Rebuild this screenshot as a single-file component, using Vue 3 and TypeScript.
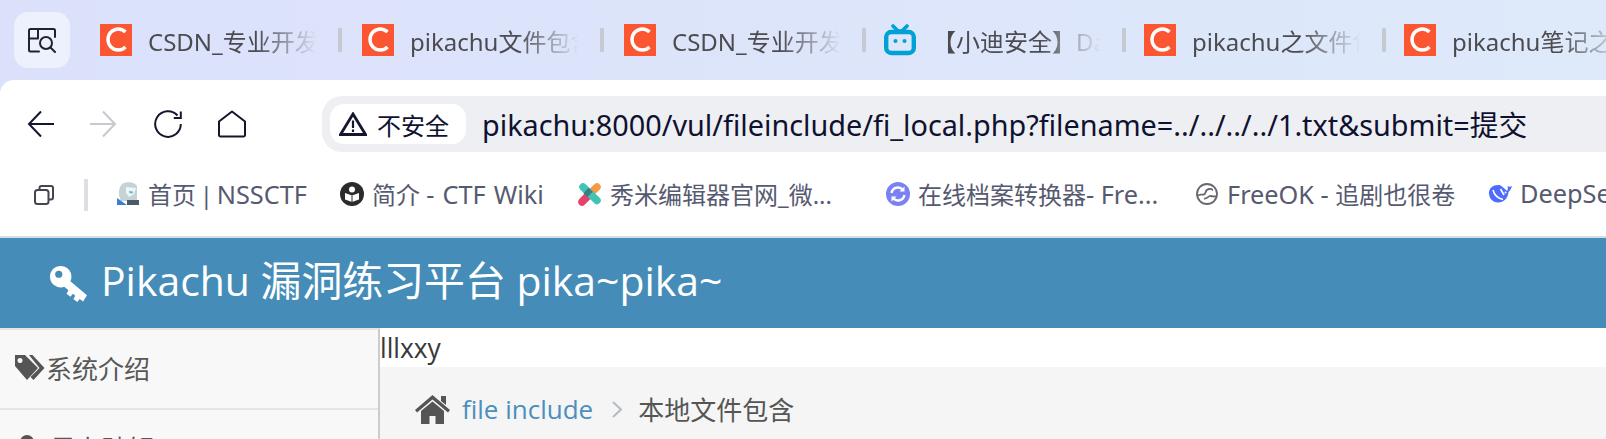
<script setup lang="ts">
interface Tab { title: string; icon: 'csdn' | 'bili'; width: number }
interface Part { text: string; latin?: boolean; gap?: number }
interface Mark { parts: Part[]; icon: string; width: number }

const tabs: Tab[] = [
  { title: 'CSDN_专业开发者社区', icon: 'csdn', width: 262 },
  { title: 'pikachu文件包含漏洞', icon: 'csdn', width: 262 },
  { title: 'CSDN_专业开发者社区', icon: 'csdn', width: 260 },
  { title: '【小迪安全】Day', icon: 'bili', width: 260 },
  { title: 'pikachu之文件包含', icon: 'csdn', width: 260 },
  { title: 'pikachu笔记之文件包含', icon: 'csdn', width: 260 }
]

const marks: Mark[] = [
  { parts: [{ text: '首页 | ', gap: -2.5 }, { text: 'NSSCTF', latin: true }], icon: 'nss', width: 224 },
  { parts: [{ text: '简介 ' }, { text: '- CTF Wiki', latin: true, gap: 1.5 }], icon: 'wiki', width: 238 },
  { parts: [{ text: '秀米编辑器官网_微...' }], icon: 'xiumi', width: 308 },
  { parts: [{ text: '在线档案转换器' }, { text: '- Fre...', latin: true }], icon: 'conv', width: 309 },
  { parts: [{ text: 'FreeOK - ', latin: true }, { text: '追剧也很卷' }], icon: 'free', width: 293 },
  { parts: [{ text: 'DeepSeek', latin: true }], icon: 'deep', width: 160 }
]
</script>

<template>
  <div class="page">
    <div class="tabbar">
      <button class="tab-search" type="button" aria-label="标签搜索">
        <svg width="28" height="25" viewBox="0 0 28 25" fill="none" stroke="#20222e" stroke-width="2" stroke-linecap="round" stroke-linejoin="round">
          <path d="M11 23.500H2.500A1.500 1.500 0 0 1 1 22V2.500A1.500 1.500 0 0 1 2.500 1h23A1.500 1.500 0 0 1 27 2.500V9" />
          <path d="M10 1v9.500H1" />
          <circle cx="18" cy="15" r="6" />
          <path d="M22.500 19.500l4.500 4.500" />
        </svg>
      </button>
      <div class="tabs">
        <div v-for="(tab, i) in tabs" :key="i" class="tab" :style="{ width: tab.width + 'px' }">
          <svg v-if="tab.icon === 'csdn'" class="fav" width="32" height="32" viewBox="0 0 32 32">
            <rect width="32" height="32" fill="#fc5531" />
            <path d="M25.500 8C23.500 6 21 5 18.500 5C12.500 5 8 9.500 8 15.500C8 21.500 12.500 26 18.500 26C21 26 23.500 25 25.500 23" fill="none" stroke="#fff" stroke-width="3.400" />
          </svg>
          <svg v-else class="fav" width="32" height="32" viewBox="0 0 32 32">
            <path d="M9 2l5 5h4l5-5" fill="none" stroke="#00a1d6" stroke-width="3.600" stroke-linecap="round" />
            <rect x="2.200" y="8" width="27.600" height="21" rx="5" fill="none" stroke="#00a1d6" stroke-width="4.400" />
            <circle cx="11.500" cy="17" r="2" fill="#00a1d6" />
            <circle cx="20.500" cy="17" r="2" fill="#00a1d6" />
          </svg>
          <span class="tab-title">{{ tab.title }}</span>
          <i class="tab-sep"></i>
        </div>
      </div>
    </div>

    <div class="toolbar">
      <div class="nav-row">
        <div class="nav-buttons">
          <svg width="28" height="28" viewBox="0 0 28 28" fill="none" stroke="#14162e" stroke-width="2">
            <path d="M28 14H3M15 1.500L3 14l12 12.500" />
          </svg>
          <svg width="28" height="28" viewBox="0 0 28 28" fill="none" stroke="#c8c8d0" stroke-width="2">
            <path d="M0 14H25M13 1.500L25 14 13 26.500" />
          </svg>
          <svg width="28" height="28" viewBox="0 0 28 28" fill="none" stroke="#14162e" stroke-width="2">
            <path d="M23.500 5.500A12.800 12.800 0 1 0 26.800 14" />
            <path d="M26.800 1.500v6.500h-7" />
          </svg>
          <svg width="28" height="28" viewBox="0 0 28 28" fill="none" stroke="#14162e" stroke-width="2" stroke-linejoin="round">
            <path d="M14 1.500L27 11.500V25a1.500 1.500 0 0 1-1.500 1.500H2.500A1.500 1.500 0 0 1 1 25V11.500z" />
          </svg>
        </div>
        <div class="address">
          <div class="chip">
            <svg width="28" height="24" viewBox="0 0 28 24">
              <path d="M14 2L26.500 22.500H1.500z" fill="none" stroke="#14162e" stroke-width="2.800" />
              <path d="M14 8.500v7.500M14 17.500v2.500" stroke="#14162e" stroke-width="2.200" />
            </svg>
            <span>不安全</span>
          </div>
          <span class="url">pikachu:8000/vul/fileinclude/fi_local.php?filename=../../../../1.txt&amp;submit=提交</span>
        </div>
      </div>

      <div class="bookmarks">
        <svg class="copy" width="20" height="20" viewBox="0 0 20 20" fill="none" stroke="#44464f" stroke-width="2">
          <rect x="1" y="5" width="13.500" height="14" rx="2.500" />
          <path d="M5.500 5V3a2 2 0 0 1 2-2H17a2 2 0 0 1 2 2v9.500a2 2 0 0 1-2 2h-2.500" />
        </svg>
        <i class="mark-sep"></i>
        <div class="marks">
          <div v-for="m in marks" :key="m.icon" class="mark" :style="{ width: m.width + 'px' }">
            <svg class="mark-icon" width="24" height="24" viewBox="0 0 24 24">
              <template v-if="m.icon === 'nss'">
                <path d="M6 2c4-3 13-2 15 2v15H5C2 13 2 7 6 2z" fill="#c5d3d6" />
                <path d="M10 5l10 1-2 6-5 3-3-4z" fill="#eef6f7" />
                <path d="M13 9l4 .5-.5 2-3-.5z" fill="#3fc4d6" />
                <path d="M1 16l10 7H1z" fill="#3c7fd0" />
                <path d="M11 18h12v5H11z" fill="#4a5a68" />
              </template>
              <template v-else-if="m.icon === 'wiki'">
                <circle cx="12" cy="12" r="12" fill="#2b2b2b" />
                <circle cx="12" cy="7.500" r="3" fill="#fff" />
                <path d="M5 11l7 2.500 7-2.500v6.500l-7 2.500-7-2.500z" fill="#fff" />
                <path d="M12 13.500V20" stroke="#2b2b2b" stroke-width="1" />
              </template>
              <template v-else-if="m.icon === 'xiumi'">
                <path d="M5 18.500L19 5" stroke="#f59a43" stroke-width="7.500" stroke-linecap="round" />
                <path d="M4 20L12 12" stroke="#e8406f" stroke-width="7.500" stroke-linecap="round" />
                <path d="M5 5L19 18.500" stroke="#3fc5b6" stroke-width="7.500" stroke-linecap="round" />
                <path d="M8 8.500L12 12.500" stroke="#3a7f86" stroke-width="7.500" />
              </template>
              <template v-else-if="m.icon === 'conv'">
                <circle cx="12" cy="12" r="12" fill="#7a81f5" />
                <path d="M5.500 11a6.500 6.500 0 0 1 11.500-3M18.500 13a6.500 6.500 0 0 1-11.500 3" fill="none" stroke="#fff" stroke-width="2.400" />
                <path d="M18.500 4.500v5h-5zM5.500 19.500v-5h5z" fill="#fff" />
              </template>
              <template v-else-if="m.icon === 'free'">
                <circle cx="12" cy="12" r="10" fill="none" stroke="#66686f" stroke-width="1.800" />
                <path d="M2.500 14c2-2.500 4-1 6.500-1.500s.5-5 5-5.500 3 1.500 3 1.500M9 16.500c3 1 4-3 7-2.500s3 1 5 0" fill="none" stroke="#66686f" stroke-width="1.800" />
              </template>
              <template v-else>
                <path d="M1 11C1 6 5 3 10 3c2 0 3 .500 4 1.500 2 2 4 3 5 4.500 1-1 1-3 .5-5 1.500 1 2.500 1 4.500 0-1 3-2 5-3.500 6-.5 6-4.500 10.500-10.500 10.500C5 20.500 1 16.500 1 11z" fill="#4d6bfe" />
                <path d="M5 8c1 4 4 8 10 9.500" fill="none" stroke="#fff" stroke-width="1.600" />
                <path d="M12.500 7l3.500 6" stroke="#fff" stroke-width="1.600" />
                <circle cx="17.500" cy="10.500" r="1" fill="#fff" />
              </template>
            </svg>
            <span class="mark-title"><span v-for="(p, k) in m.parts" :key="k" :class="{ latin: p.latin }" :style="p.gap ? { wordSpacing: p.gap + 'px' } : undefined">{{ p.text }}</span></span>
          </div>
        </div>
      </div>
    </div>

    <header class="site-head">
      <svg width="38" height="37" viewBox="0 0 39 38">
        <circle cx="12" cy="12" r="11" fill="#fff" />
        <path d="M17 12.500L39 31l-4 6.500-3.500-2.500-2.500 3-4-3 2-3.500-2.500-2-2.500 3-4-3 2-3.500-7-6z" fill="#fff" />
        <circle cx="10" cy="9.500" r="3.700" fill="#458db8" />
      </svg>
      <span class="site-title">Pikachu 漏洞练习平台 pika~pika~</span>
    </header>

    <div class="main">
      <aside class="sidebar">
        <div class="side-row">
          <svg width="31" height="27" viewBox="0 0 31 27" fill="#555">
            <path d="M1 1h10l13 13-11 12L1 12zM6 4a2.500 2.500 0 1 0 0 5 2.500 2.500 0 0 0 0-5z" fill-rule="evenodd" />
            <path d="M15 1h3.500l12 13-11 12-3-3 9-9z" />
          </svg>
          <span>系统介绍</span>
        </div>
        <div class="side-row">
          <svg class="lock" width="18" height="26" viewBox="0 0 18 26" fill="none">
            <path d="M4 12V7a5 5 0 0 1 10 0v5" stroke="#555" stroke-width="4" />
            <rect x="0" y="11" width="18" height="14" rx="2" fill="#555" />
          </svg>
          <span>暴力破解</span>
        </div>
      </aside>
      <section class="content">
        <div class="output">lllxxy</div>
        <nav class="crumbs">
          <svg width="35" height="29" viewBox="0 0 35 29" fill="#555">
            <path d="M17.500 0L35 15l-2 2.500-15.500-13L2 17.500 0 15zM26 1h5v9l-5-4z" />
            <path d="M6 16L17.500 6.500 29 16v13h-8.500v-8h-6v8H6z" />
          </svg>
          <a class="crumb-link">file include</a>
          <svg class="chev" width="10" height="17" viewBox="0 0 10 17" fill="none" stroke="#b7bdc6" stroke-width="2.200">
            <path d="M1 1l8 7.500L1 16" />
          </svg>
          <span class="crumb-now">本地文件包含</span>
        </nav>
      </section>
    </div>
  </div>
</template>

<style>
html, body { margin: 0; overflow: hidden; background: #fff; }
</style>

<style scoped>
.page {
  width: 1606px;
  height: 439px;
  overflow: hidden;
  font-family: "Open Sans", "Noto Sans CJK SC", sans-serif;
  display: flex;
  flex-direction: column;
  background: linear-gradient(90deg, #dbe1fb, #dee9fa);
}
.tabbar {
  height: 80px;
  flex: none;
  display: flex;
  align-items: flex-start;
  padding-left: 14px;
  box-sizing: border-box;
}
.tab-search {
  width: 56px;
  height: 56px;
  flex: none;
  margin-top: 12px;
  border: 0;
  padding: 0;
  background: #edf0fd;
  border-radius: 14px;
  display: flex;
  align-items: center;
  justify-content: center;
}
.tabs {
  display: flex;
  flex: none;
  margin-left: 30px;
}
.tab {
  position: relative;
  flex: none;
  height: 80px;
  display: flex;
  align-items: center;
  box-sizing: border-box;
}
.fav { flex: none; }
.tab-title {
  margin-left: 16px;
  width: 174px;
  flex: none;
  white-space: nowrap;
  overflow: hidden;
  font-family: "Noto Sans", "Noto Sans CJK SC", sans-serif;
  font-size: 24px;
  color: #4c4c50;
  -webkit-mask-image: linear-gradient(90deg, #000 62%, transparent 97%);
  mask-image: linear-gradient(90deg, #000 62%, transparent 97%);
}
.tab-sep {
  position: absolute;
  left: 238px;
  top: 28px;
  width: 4px;
  height: 24px;
  background: #c7c9d0;
  border-radius: 1px;
}
.toolbar {
  flex: none;
  height: 158px;
  background: #fff;
  border-radius: 14px 0 0 0;
  border-bottom: 2px solid #d6dee4;
  box-sizing: border-box;
  display: flex;
  flex-direction: column;
}
.nav-row {
  height: 88px;
  padding-top: 16px;
  box-sizing: border-box;
  display: flex;
  flex: none;
}
.nav-buttons {
  width: 322px;
  flex: none;
  padding-left: 26px;
  height: 56px;
  box-sizing: border-box;
  display: flex;
  align-items: center;
  gap: 36px;
}
.address {
  flex: 1;
  height: 56px;
  background: #eeeff3;
  border-radius: 20px 0 0 20px;
  display: flex;
  align-items: center;
  padding-left: 8px;
  color: #0f1130;
}
.chip {
  width: 136px;
  height: 40px;
  flex: none;
  box-sizing: border-box;
  background: #fff;
  border-radius: 14px;
  display: flex;
  align-items: center;
  padding-left: 9px;
  gap: 10px;
  font-size: 24px;
  font-family: "Noto Sans CJK SC", sans-serif;
}
.url {
  margin-left: 16px;
  margin-bottom: 2px;
  font-family: "Noto Sans", "Noto Sans CJK SC", sans-serif;
  font-size: 28.800px;
  white-space: nowrap;
}
.bookmarks {
  height: 54px;
  display: flex;
  align-items: center;
  padding-left: 34px;
}
.copy { flex: none; }
.mark-sep {
  width: 4px;
  height: 32px;
  background: #dcdee3;
  margin-left: 30px;
  flex: none;
}
.marks {
  display: flex;
  flex: none;
  margin-left: 28px;
}
.mark {
  flex: none;
  display: flex;
  align-items: center;
  gap: 8px;
}
.mark-icon { flex: none; margin-bottom: 2px; }
.mark-title {
  font-family: "Noto Sans", "Noto Sans CJK SC", sans-serif;
  font-size: 24px;
  color: #565a70;
  white-space: nowrap;
  margin-bottom: 4px;
}
.latin { font-size: 25.300px; }
.site-head {
  flex: none;
  height: 90px;
  background: #458db8;
  color: #fff;
  display: flex;
  align-items: center;
  padding-left: 49px;
  gap: 14px;
  font-size: 40.900px;
  white-space: nowrap;
}
.site-title { margin-bottom: 10px; }
.main {
  flex: 1;
  min-height: 0;
  display: flex;
  background: #fff;
}
.sidebar {
  width: 380px;
  flex: none;
  box-sizing: border-box;
  background: #f8f8f8;
  border-right: 2px solid #ccc;
  border-top: 2px solid #e5e5e5;
}
.side-row {
  height: 80px;
  box-sizing: border-box;
  border-bottom: 2px solid #e5e5e5;
  display: flex;
  align-items: center;
  padding: 0 0 3px 14px;
  gap: 1px;
  font-size: 26px;
  color: #585858;
}
.lock { margin: 0 13px 0 4px; }
.content {
  flex: 1;
  display: flex;
  flex-direction: column;
}
.output {
  height: 39px;
  line-height: 41px;
  font-size: 26.400px;
  color: #393939;
  flex: none;
}
.crumbs {
  flex: 1;
  background: #f5f5f5;
  display: flex;
  align-items: center;
  padding: 12px 0 0 35px;
}
.crumb-link {
  margin-left: 12px;
  font-size: 26px;
  color: #4c8fbd;
}
.chev { margin-left: 19px; }
.crumb-now {
  margin-left: 16px;
  font-size: 26px;
  color: #555;
}
</style>
